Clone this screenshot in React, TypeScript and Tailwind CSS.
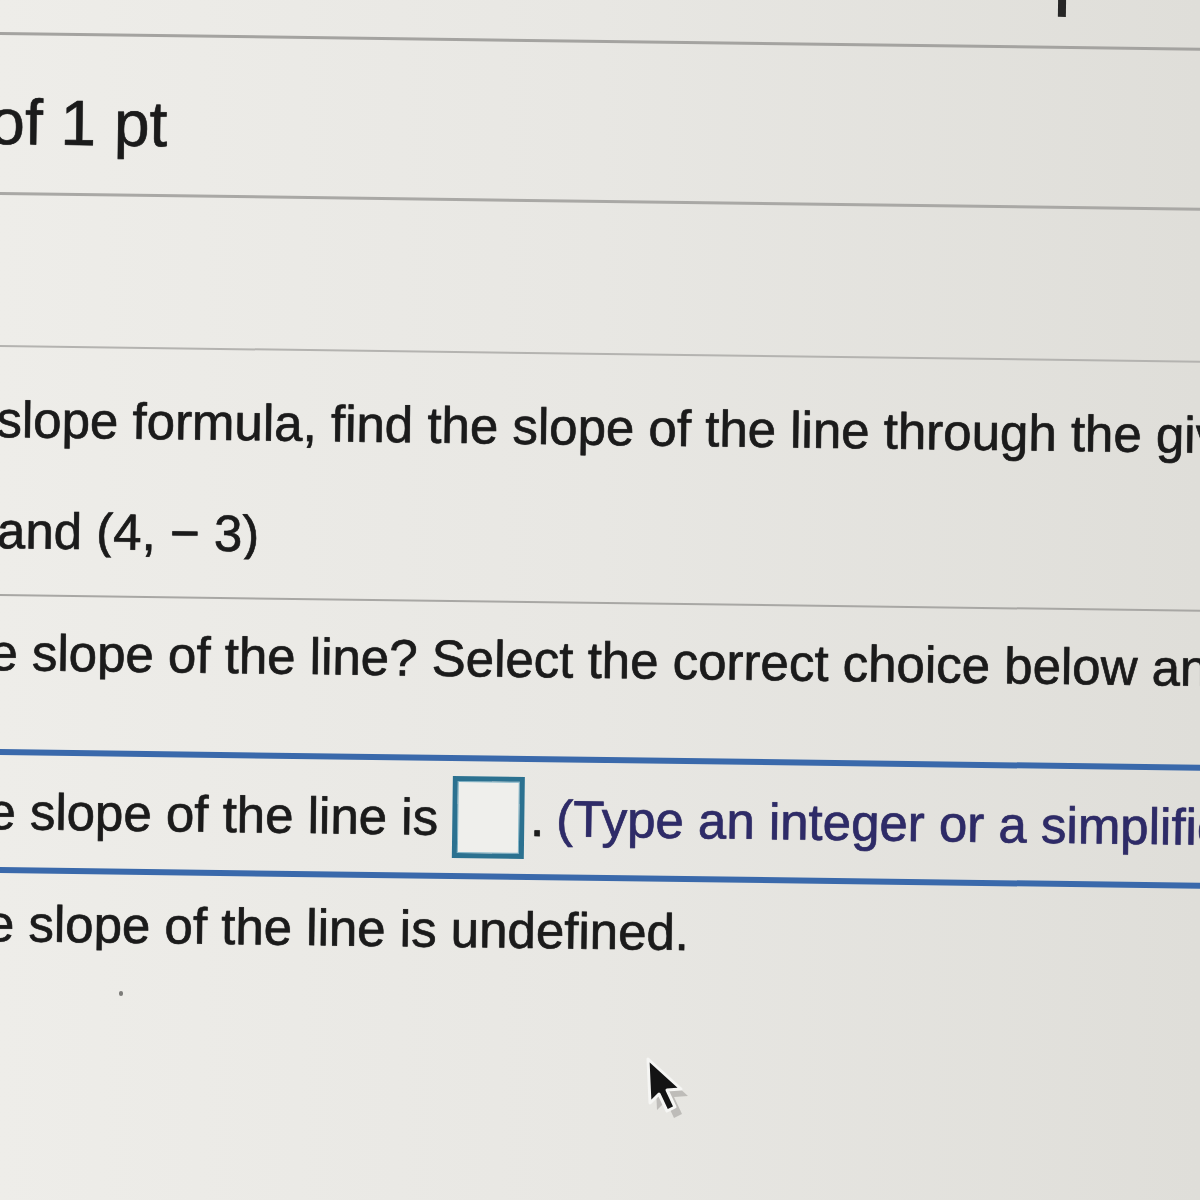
import React from "react";

const font = { fontFamily: '"Liberation Sans", Arial, sans-serif' };

const App = () => {
  return (
    <div
      className="relative w-[1200px] h-[1200px] overflow-hidden bg-gradient-to-r from-[#eeede9] via-[#e8e7e3] to-[#dfded9] text-[#1b1b1b] [-webkit-text-stroke-width:0.6px] [text-shadow:0_0_1px_rgba(0,0,0,0.5)]"
      style={font}
    >
      <div className="w-[1260px] origin-top-left rotate-[0.75deg] flex flex-col">
        {/* top strip */}
        <div className="h-[32px] flex items-start justify-end pr-[194px]">
          <div className="w-[8px] h-[18px] -mt-[15px] bg-[#262626]" />
        </div>
        <div className="h-[3px] bg-[#a4a3a0]" />

        {/* points header */}
        <div className="h-[157px] pt-[55px] overflow-hidden whitespace-nowrap">
          <div className="-ml-[9px] text-[64px] leading-[64px]">of 1 pt</div>
        </div>
        <div className="h-[3px] bg-[#a9a8a5]" />

        <div className="h-[150px]" />
        <div className="h-[2px] bg-[#b4b3b0]" />

        {/* question */}
        <div className="pt-[47px] overflow-hidden whitespace-nowrap">
          <div className="ml-[2px] text-[51px] leading-[51px]">
            slope formula, find the slope of the line through the given points.
          </div>
          <div className="mt-[60px] ml-[4px] text-[51px] leading-[51px]">and (4, − 3)</div>
        </div>

        <div className="mt-[38px] h-[2px] bg-[#a8a7a4]" />

        <div className="pt-[31px] overflow-hidden whitespace-nowrap">
          <div className="-ml-[2px] text-[51px] leading-[51px]">
            e slope of the line? Select the correct choice below and fill in the answer box.
          </div>
        </div>

        {/* choices */}
        <div className="mt-[71px] h-[6px] bg-[#3a69ab]" />
        <div className="h-[112px] flex items-center overflow-hidden whitespace-nowrap text-[51px] leading-[51px]">
          <span className="-ml-[2px]">e slope of the line is</span>
          <div className="ml-[14px] w-[72px] h-[82px] shrink-0 border-[5px] border-[#2b7190] bg-[#efefec] shadow-[inset_0_0_0_1px_#7fb3c6]" />
          <span className="ml-[6px]">.</span>
          <span className="ml-[12px] text-[#2e2b68]">(Type an integer or a simplified fraction.)</span>
        </div>
        <div className="h-[6px] bg-[#3a69ab]" />

        <div className="pt-[25px] overflow-hidden whitespace-nowrap">
          <div className="-ml-[2px] text-[51px] leading-[51px]">e slope of the line is undefined.</div>
        </div>
      </div>

      {/* speck */}
      <div className="absolute left-[119px] top-[991px] w-[4px] h-[5px] rounded-full bg-[#7d7c79]" />

      {/* mouse cursor */}
      <svg className="absolute left-[640px] top-[1051px]" width="56" height="72" viewBox="0 0 56 72">
        <path
          d="M11 11 L13 55 L22 46 L30 63 L38 59 L30 42 L44 41 Z"
          fill="#5f5e5b"
          opacity="0.3"
          transform="translate(4 4)"
        />
        <path
          d="M8 8 L10 52 L19 43 L27 60 L35 56 L27 39 L41 38 Z"
          fill="#141414"
          stroke="#f6f6f4"
          strokeWidth="3"
          strokeLinejoin="round"
        />
      </svg>
    </div>
  );
};

export default App;
